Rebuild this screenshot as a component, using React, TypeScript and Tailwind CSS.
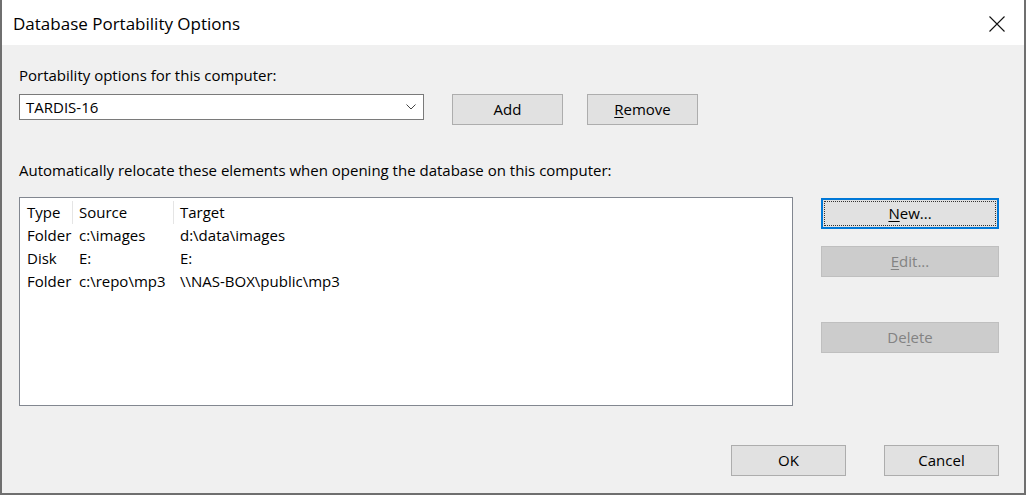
import React from "react";

const font = { fontFamily: '"Open Sans", "Noto Sans", sans-serif' };

type Row = { type: string; source: string; target: string };

const rows: Row[] = [
  { type: "Folder", source: "c:\\images", target: "d:\\data\\images" },
  { type: "Disk", source: "E:", target: "E:" },
  { type: "Folder", source: "c:\\repo\\mp3", target: "\\\\NAS-BOX\\public\\mp3" },
];

const Button = ({
  children,
  className = "",
  disabled = false,
  focused = false,
}: {
  children: React.ReactNode;
  className?: string;
  disabled?: boolean;
  focused?: boolean;
}) => {
  if (focused) {
    return (
      <div className={`border-2 border-[#0078d7] bg-[#e1e1e1] p-px ${className}`}>
        <div className="h-full border border-dotted border-[#333] flex items-center justify-center text-black">
          {children}
        </div>
      </div>
    );
  }
  return (
    <div
      className={`flex items-center justify-center border ${
        disabled
          ? "bg-[#cccccc] border-[#bfbfbf] text-[#838383]"
          : "bg-[#e1e1e1] border-[#adadad] text-black"
      } ${className}`}>
      {children}
    </div>
  );
};

export default function App() {
  return (
    <div
      className="w-[1026px] h-[495px] bg-[#f0f0f0] text-[15px] text-black border-l-2 border-r-2 border-b-2 border-[#6f6f6f] flex flex-col overflow-hidden"
      style={font}>
      {/* title bar */}
      <div className="h-[45px] bg-white flex items-center justify-between pl-[11px] pr-[14px] shrink-0">
        <span className="text-[17px] mt-[3px]">Database Portability Options</span>
        <svg width="18" height="18" viewBox="0 0 18 18" className="mr-[4px] mt-[2px]">
          <path d="M1.5 1.5 L16.5 16.5 M16.5 1.5 L1.5 16.5" stroke="#111" strokeWidth="1.1" />
        </svg>
      </div>

      <div className="flex-1 pl-[17px] pr-[25px] pt-[20px]">
        <div className="leading-[20px]">Portability options for this computer:</div>

        <div className="flex items-start mt-[9px]">
          <div className="w-[405px] h-[26px] bg-white border border-[#7a7a7a] flex items-center justify-between pl-[6px] pr-[7px]">
            <span className="leading-none">TARDIS-16</span>
            <svg width="10" height="6" viewBox="0 0 10 6">
              <path d="M0.5 0.5 L5 5 L9.5 0.5" fill="none" stroke="#444" strokeWidth="1" />
            </svg>
          </div>
          <Button className="w-[111px] h-[31px] ml-[28px]">Add</Button>
          <Button className="w-[111px] h-[31px] ml-[24px]">
            <span>
              <span className="underline underline-offset-2">R</span>emove
            </span>
          </Button>
        </div>

        <div className="mt-[35px] leading-[20px]">
          Automatically relocate these elements when opening the database on this computer:
        </div>

        <div className="flex items-start mt-[17px]">
          <div className="w-[774px] h-[209px] bg-white border border-[#828790] pt-[3px]">
            <div className="grid grid-cols-[53px_101px_1fr] leading-[23px]">
              <div className="pl-[7px] border-r border-[#e5e5e5] h-[23px]">Type</div>
              <div className="pl-[6px] border-r border-[#e5e5e5] h-[23px]">Source</div>
              <div className="pl-[6px] h-[23px]">Target</div>
              {rows.map((r, i) => (
                <React.Fragment key={i}>
                  <div className="pl-[7px]">{r.type}</div>
                  <div className="pl-[6px]">{r.source}</div>
                  <div className="pl-[6px]">{r.target}</div>
                </React.Fragment>
              ))}
            </div>
          </div>

          <div className="flex flex-col ml-[28px] mt-[1px]">
            <Button focused className="w-[178px] h-[31px]">
              <span>
                <span className="underline underline-offset-2">N</span>ew...
              </span>
            </Button>
            <Button disabled className="w-[178px] h-[31px] mt-[17px]">
              <span>
                <span className="underline underline-offset-2">E</span>dit...
              </span>
            </Button>
            <Button disabled className="w-[178px] h-[31px] mt-[45px]">
              <span>
                De<span className="underline underline-offset-2">l</span>ete
              </span>
            </Button>
          </div>
        </div>

        <div className="flex justify-end mt-[39px]">
          <Button className="w-[115px] h-[31px]">OK</Button>
          <Button className="w-[115px] h-[31px] ml-[38px]">Cancel</Button>
        </div>
      </div>
    </div>
  );
}
